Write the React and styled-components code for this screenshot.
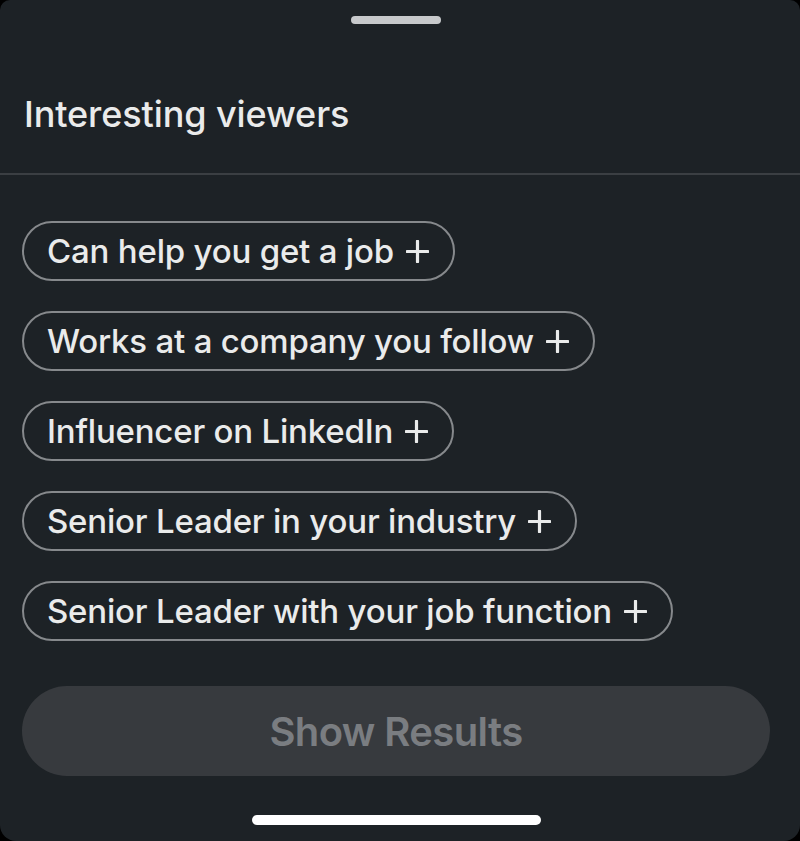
import React from "react";
import styled, { createGlobalStyle } from "styled-components";

////colors////
const colorSheet = "#1d2226";
const colorText = "#eaebeb";
const colorChipBorder = "#86898c";
const colorDivider = "#3b3f43";
const colorButton = "#373a3e";
const colorButtonText = "#7a7d81";

const GlobalStyle = createGlobalStyle`
  html, body {
    margin: 0;
    padding: 0;
    background: #000000;
  }
  * {
    box-sizing: border-box;
  }
`;

const Sheet = styled.div`
  width: 800px;
  height: 841px;
  background: ${colorSheet};
  border-radius: 10px 10px 16px 16px;
  overflow: hidden;
  display: flex;
  flex-direction: column;
  font-family: Inter, "Noto Sans", "Liberation Sans", sans-serif;
  color: ${colorText};
`;

const GrabberRow = styled.div`
  display: flex;
  justify-content: center;
  padding: 16px 8px 0 0;
`;

const Grabber = styled.div`
  width: ${(props) => props.$width}px;
  height: ${(props) => props.$height}px;
  border-radius: 6px;
  background: ${(props) => props.$color};
`;

const Header = styled.div`
  padding: 30px 24px 0;
  height: 151px;
  display: flex;
  align-items: center;
  border-bottom: 2px solid ${colorDivider};
`;

const Title = styled.h2`
  margin: 0;
  font-size: 36px;
  font-weight: 500;
  letter-spacing: -0.1px;
`;

const ChipList = styled.div`
  display: flex;
  flex-direction: column;
  align-items: flex-start;
  gap: 30px;
  padding: 46px 22px 0;
`;

const Chip = styled.button`
  height: 60px;
  padding: 0 24px 0 23px;
  border: 2px solid ${colorChipBorder};
  border-radius: 30px;
  background: transparent;
  color: ${colorText};
  font-family: inherit;
  font-size: 33px;
  font-weight: 500;
  letter-spacing: -0.2px;
  display: flex;
  align-items: center;
  gap: 12px;
`;

const PlusIcon = () => (
  <svg width="23" height="23" viewBox="0 0 23 23" fill="none">
    <path
      d="M11.5 1.2v20.6M1.2 11.5h20.6"
      stroke={colorText}
      strokeWidth="3.2"
      strokeLinecap="round"
    />
  </svg>
);

const Footer = styled.div`
  padding: 45px 30px 0 22px;
  display: flex;
  flex-direction: column;
  align-items: center;
  gap: 39px;
`;

const ShowButton = styled.button`
  width: 100%;
  height: 90px;
  border: none;
  border-radius: 45px;
  background: ${colorButton};
  color: ${colorButtonText};
  font-family: inherit;
  font-size: 40px;
  font-weight: 600;
  letter-spacing: -0.6px;
`;

const filters = [
  "Can help you get a job",
  "Works at a company you follow",
  "Influencer on LinkedIn",
  "Senior Leader in your industry",
  "Senior Leader with your job function",
];

const App = () => {
  return (
    <>
      <GlobalStyle />
      <Sheet>
        <GrabberRow>
          <Grabber $width={90} $height={8} $color="#c7c9cb" />
        </GrabberRow>
        <Header>
          <Title>Interesting viewers</Title>
        </Header>
        <ChipList>
          {filters.map((label) => (
            <Chip key={label}>
              {label}
              <PlusIcon />
            </Chip>
          ))}
        </ChipList>
        <Footer>
          <ShowButton>Show Results</ShowButton>
          <Grabber $width={289} $height={10} $color="#ffffff" />
        </Footer>
      </Sheet>
    </>
  );
};

export default App;
